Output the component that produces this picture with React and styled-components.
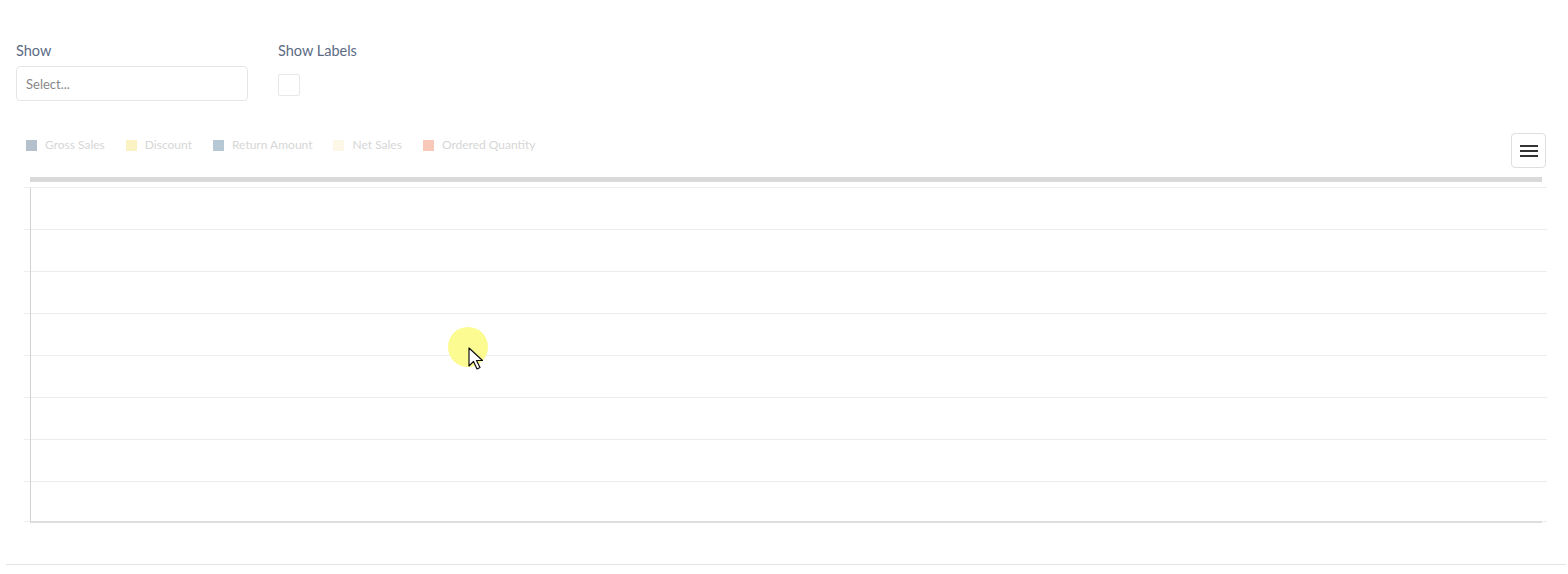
import React from 'react'
import styled, { createGlobalStyle } from 'styled-components'

const series = [
    { name: 'Gross Sales', color: '#b4c0cc' },
    { name: 'Discount', color: '#fbf2c4' },
    { name: 'Return Amount', color: '#b6c8d4' },
    { name: 'Net Sales', color: '#fcf7e6' },
    { name: 'Ordered Quantity', color: '#f8c9b8' },
]

const gridRows = [10, 52, 94, 136, 178, 220, 262, 304]

export default function App() {
    return (
        <Page>
            <GlobalStyle />

            <Controls>
                <Field width="232px">
                    <Label>Show</Label>
                    <SelectBox>Select...</SelectBox>
                </Field>
                <Field>
                    <Label>Show Labels</Label>
                    <Checkbox />
                </Field>
            </Controls>

            <ChartWrap>
                <ChartTop>
                    <Legend>
                        {series.map(s => (
                            <LegendItem key={s.name}>
                                <Swatch color={s.color} />
                                {s.name}
                            </LegendItem>
                        ))}
                    </Legend>
                    <MenuButton aria-label="Chart menu">
                        <svg width="18" height="14" viewBox="0 0 18 14">
                            <rect x="0" y="1" width="18" height="2" fill="#333" />
                            <rect x="0" y="6" width="18" height="2" fill="#333" />
                            <rect x="0" y="11" width="18" height="2" fill="#333" />
                        </svg>
                    </MenuButton>
                </ChartTop>

                <Plot width="1523" height="348" viewBox="0 0 1523 348">
                    <rect x="6" y="0" width="1512" height="5" fill="#d9d9d9" />
                    {gridRows.map(y => (
                        <line key={y} x1="0" x2="1523" y1={y + 0.5} y2={y + 0.5} stroke="#ededed" />
                    ))}
                    <line x1="0" x2="1523" y1="344.5" y2="344.5" stroke="#ededed" />
                    <line x1="6.5" x2="6.5" y1="11" y2="346" stroke="#d2d2d2" />
                    <rect x="6" y="344" width="1512" height="2" fill="#dedede" />
                </Plot>
            </ChartWrap>

            <Divider />

            <Cursor>
                <svg width="20" height="26" viewBox="0 0 20 26">
                    <path d="M1 1 L1 19 L5.5 14.5 L9 22 L12 20.5 L8.5 13.5 L14.5 13.5 Z" fill="#fff" stroke="#111" strokeWidth="1.2" strokeLinejoin="round" />
                </svg>
            </Cursor>
        </Page>
    )
}

const GlobalStyle = createGlobalStyle`
    body {
        margin: 0;
        background: #fff;
        font-family: "Source Sans Pro", Lato, "Liberation Sans", sans-serif;
    }
`

const Page = styled.div`
    position: relative;
    width: 1568px;
    height: 574px;
    overflow: hidden;
    padding-top: 41px;
    box-sizing: border-box;
`

const Controls = styled.div`
    display: flex;
    gap: 30px;
    padding: 0 16px;
`

const Field = styled.div`
    display: flex;
    flex-direction: column;
    width: ${p => p.width || 'auto'};
`

const Label = styled.div`
    font-size: 14.5px;
    line-height: 20px;
    color: #5b6b84;
    margin-bottom: 5px;
`

const SelectBox = styled.div`
    height: 35px;
    box-sizing: border-box;
    border: 1px solid #e6e6e6;
    border-radius: 4px;
    padding: 0 9px;
    display: flex;
    align-items: center;
    font-size: 13px;
    color: #888;
`

const Checkbox = styled.div`
    width: 22px;
    height: 22px;
    box-sizing: border-box;
    margin-top: 8px;
    border: 1px solid #e8e8e8;
    border-radius: 2px;
`

const ChartWrap = styled.div`
    margin-top: 32px;
    padding: 0 21px 0 24px;
`

const ChartTop = styled.div`
    display: flex;
    justify-content: space-between;
    align-items: flex-start;
    padding-left: 2px;
    height: 34px;
`

const Legend = styled.div`
    display: flex;
    gap: 21px;
    line-height: 20px;
    padding-top: 2px;
`

const LegendItem = styled.div`
    display: flex;
    align-items: center;
    gap: 8px;
    font-size: 12px;
    color: #d6d6d6;
`

const Swatch = styled.span`
    width: 11px;
    height: 11px;
    background: ${p => p.color};
`

const MenuButton = styled.button`
    width: 35px;
    height: 35px;
    margin-right: 1px;
    padding: 0;
    display: flex;
    align-items: center;
    justify-content: center;
    background: #fff;
    border: 1px solid #dedede;
    border-radius: 4px;
`

const Plot = styled.svg`
    display: block;
    margin-top: 10px;
`

const Divider = styled.div`
    margin: 39px 2px 0 6px;
    height: 1px;
    background: #e3e3e3;
`

const Cursor = styled.div`
    position: absolute;
    left: 448px;
    top: 327px;
    width: 40px;
    height: 40px;
    border-radius: 50%;
    background: #fbfb92;

    svg {
        position: absolute;
        left: 20px;
        top: 20px;
    }
`
